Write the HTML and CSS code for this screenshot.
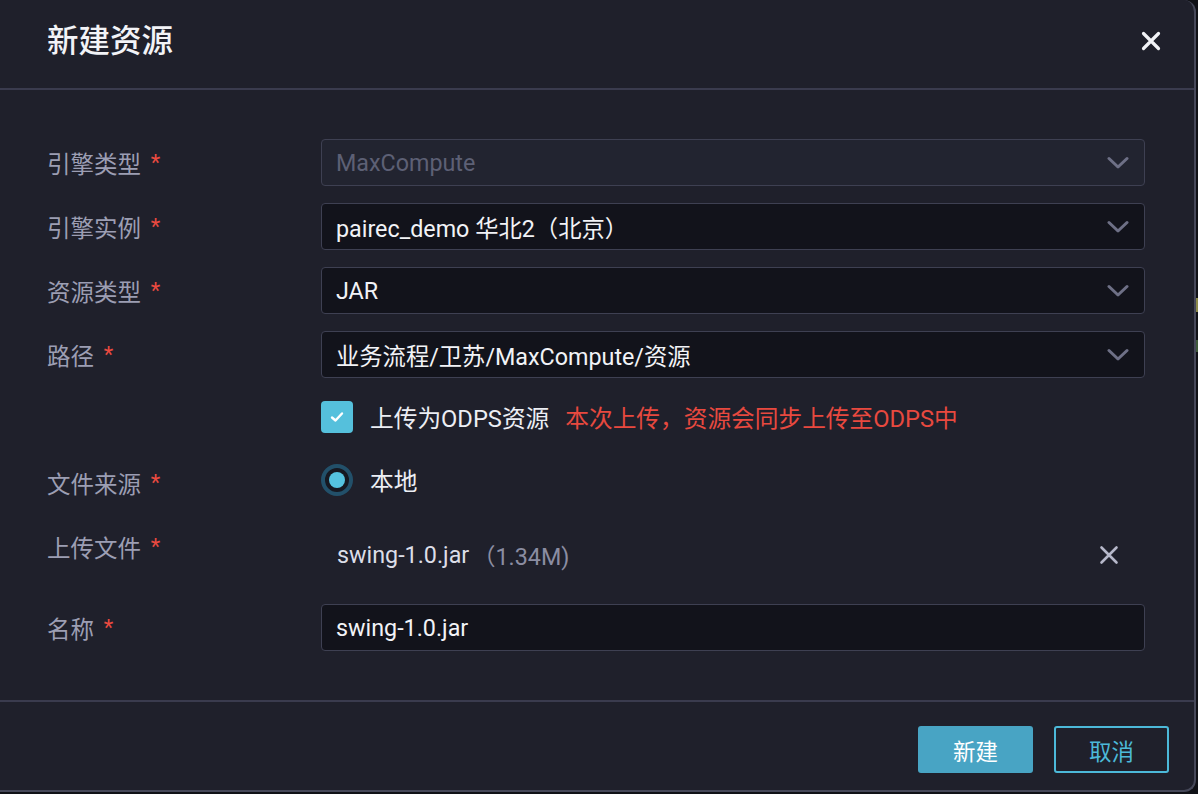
FILE: index.html
```html
<!DOCTYPE html>
<html lang="zh-CN">
<head>
<meta charset="utf-8">
<title>新建资源</title>
<link rel="stylesheet" href="styles.css">
</head>
<body>
<div class="page">
  <div class="dialog">
    <div class="dlg-header">
      <h1 class="dlg-title">新建资源</h1>
      <button class="dlg-close" aria-label="关闭">
        <svg width="20" height="20" viewBox="0 0 20 20"><path d="M2.5 2.5L17.5 17.5M17.5 2.5L2.5 17.5" stroke="#f2f3f7" stroke-width="3.2" stroke-linecap="round"/></svg>
      </button>
    </div>
    <div class="dlg-body">
      <div class="form">
        <div class="label">引擎类型 <span class="req">*</span></div>
        <div class="ctrl">
          <div class="select disabled"><span>MaxCompute</span><svg class="chev" width="22" height="14" viewBox="0 0 22 14"><path d="M2 2.5L11 11L20 2.5" fill="none" stroke="#6e7086" stroke-width="3" stroke-linecap="round" stroke-linejoin="round"/></svg></div>
        </div>

        <div class="label">引擎实例 <span class="req">*</span></div>
        <div class="ctrl">
          <div class="select"><span>pairec_demo 华北2（北京）</span><svg class="chev" width="22" height="14" viewBox="0 0 22 14"><path d="M2 2.5L11 11L20 2.5" fill="none" stroke="#6e7086" stroke-width="3" stroke-linecap="round" stroke-linejoin="round"/></svg></div>
        </div>

        <div class="label">资源类型 <span class="req">*</span></div>
        <div class="ctrl">
          <div class="select"><span>JAR</span><svg class="chev" width="22" height="14" viewBox="0 0 22 14"><path d="M2 2.5L11 11L20 2.5" fill="none" stroke="#6e7086" stroke-width="3" stroke-linecap="round" stroke-linejoin="round"/></svg></div>
        </div>

        <div class="label">路径 <span class="req">*</span></div>
        <div class="ctrl">
          <div class="select"><span>业务流程/卫苏/MaxCompute/资源</span><svg class="chev" width="22" height="14" viewBox="0 0 22 14"><path d="M2 2.5L11 11L20 2.5" fill="none" stroke="#6e7086" stroke-width="3" stroke-linecap="round" stroke-linejoin="round"/></svg></div>
        </div>

        <div class="label"></div>
        <div class="ctrl check-row">
          <span class="checkbox"><svg width="16" height="14" viewBox="0 0 16 14"><path d="M3 7.5L6.5 10.5L13 3.5" fill="none" stroke="#fff" stroke-width="2.4" stroke-linecap="round" stroke-linejoin="round"/></svg></span>
          <span class="check-text">上传为ODPS资源</span>
          <span class="warn">本次上传，资源会同步上传至ODPS中</span>
        </div>

        <div class="label">文件来源 <span class="req">*</span></div>
        <div class="ctrl radio-row">
          <span class="radio"><span class="dot"></span></span>
          <span class="radio-text">本地</span>
        </div>

        <div class="label">上传文件 <span class="req">*</span></div>
        <div class="ctrl file-row">
          <span class="file-name">swing-1.0.jar</span>
          <span class="file-size">（1.34M)</span>
          <button class="file-remove" aria-label="删除">
            <svg width="20" height="20" viewBox="0 0 20 20"><path d="M2.5 2.5L17.5 17.5M17.5 2.5L2.5 17.5" stroke="#b6b8ca" stroke-width="2.6" stroke-linecap="round"/></svg>
          </button>
        </div>

        <div class="label">名称 <span class="req">*</span></div>
        <div class="ctrl">
          <div class="input">swing-1.0.jar</div>
        </div>
      </div>
    </div>
    <div class="dlg-footer">
      <button class="btn primary">新建</button>
      <button class="btn ghost">取消</button>
    </div>
  </div>
  <div class="edge">
    <span class="bit bit-y"></span>
    <span class="bit bit-g"></span>
  </div>
</div>
</body>
</html>
```

FILE: styles.css
```css
* { box-sizing: border-box; }
html, body { margin: 0; padding: 0; }
body {
  background: #101116;
  font-family: Roboto, "Noto Sans CJK SC", sans-serif;
  width: 1198px;
  height: 794px;
  overflow: hidden;
}
.page {
  display: flex;
  height: 794px;
}
.dialog {
  width: 1196px;
  height: 792px;
  background: #1f202b;
  border-right: 2px solid #464859;
  border-bottom: 2px solid #464859;
  border-radius: 0 12px 12px 0;
  display: flex;
  flex-direction: column;
  flex: none;
}
.dlg-header {
  height: 90px;
  border-bottom: 2px solid #3a3b4e;
  display: flex;
  align-items: center;
  justify-content: space-between;
  padding: 0 32px 0 47px;
}
.dlg-title {
  margin: 0;
  font-size: 31.5px;
  font-weight: 500;
  color: #f2f3f7;
  line-height: 1;
  padding-bottom: 4px;
}
.dlg-close {
  background: none;
  border: 0;
  padding: 0;
  width: 22px;
  height: 22px;
  display: flex;
  align-items: center;
  justify-content: center;
  margin-bottom: 6px;
}
.dlg-body {
  padding: 49px 49px 49px 47px;
  border-bottom: 2px solid #3a3b4e;
}
.form {
  display: grid;
  grid-template-columns: 274px 1fr;
  row-gap: 17px;
}
.label {
  height: 47px;
  display: flex;
  align-items: center;
  font-size: 23.5px;
  color: #9c9eb3;
  white-space: pre;
}
.req {
  color: #ea4a40;
  margin-left: 4px;
  font-size: 22px;
}
.ctrl { min-height: 47px; }
.select, .input {
  height: 47px;
  border: 1.5px solid #3e4052;
  border-radius: 4px;
  background: #12131b;
  display: flex;
  align-items: center;
  justify-content: space-between;
  padding: 0 15px 0 14px;
  font-size: 23.3px;
  color: #f2f3f7;
}
.select.disabled {
  background: #222430;
  color: #5d6075;
}
.chev { flex: none; margin-top: 1px; }

.check-row, .radio-row {
  display: flex;
  align-items: center;
  height: 47px;
  padding-bottom: 3px;
}
.radio-row { padding-bottom: 5px; }
.checkbox {
  width: 32px;
  height: 32px;
  border-radius: 4px;
  background: #55c0dc;
  display: flex;
  align-items: center;
  justify-content: center;
}
.check-text {
  margin-left: 17px;
  font-size: 23.7px;
  color: #eceef4;
}
.warn {
  margin-left: 16px;
  font-size: 23.7px;
  color: #e8493f;
}
.radio {
  width: 32px;
  height: 32px;
  border-radius: 50%;
  border: 4px solid #22506a;
  background: #161821;
  display: flex;
  align-items: center;
  justify-content: center;
}
.radio .dot {
  width: 16px;
  height: 16px;
  border-radius: 50%;
  background: #55c3e0;
}
.radio-text {
  margin-left: 17px;
  font-size: 23.7px;
  color: #eceef4;
}
.file-row {
  height: 64px;
  display: flex;
  align-items: center;
  padding-left: 16px;
}
.file-name {
  font-size: 23.3px;
  color: #dcdee8;
}
.file-size {
  font-size: 23.3px;
  color: #8b8da2;
  margin-left: 3px;
}
.file-remove {
  margin-left: auto;
  margin-right: 26px;
  background: none;
  border: 0;
  padding: 0;
  width: 20px;
  height: 20px;
  display: flex;
}
.dlg-footer {
  display: flex;
  justify-content: flex-end;
  gap: 21px;
  padding: 24px 25px 0 0;
}
.btn {
  width: 115px;
  height: 47px;
  border-radius: 3px;
  font-family: Roboto, "Noto Sans CJK SC", sans-serif;
  font-size: 22.5px;
  display: flex;
  align-items: center;
  justify-content: center;
  padding: 0;
}
.btn.primary {
  background: #48a4c4;
  border: 0;
  color: #ffffff;
}
.btn.ghost {
  background: transparent;
  border: 2px solid #4cb9d9;
  color: #4cb9d9;
}
.edge {
  flex: 1;
  display: flex;
  flex-direction: column;
  padding-top: 298px;
}
.bit { display: block; width: 2px; }
.bit-y { height: 14px; background: #8c8a4a; }
.bit-g { height: 12px; margin-top: 28px; background: #3f5a3a; }
```
